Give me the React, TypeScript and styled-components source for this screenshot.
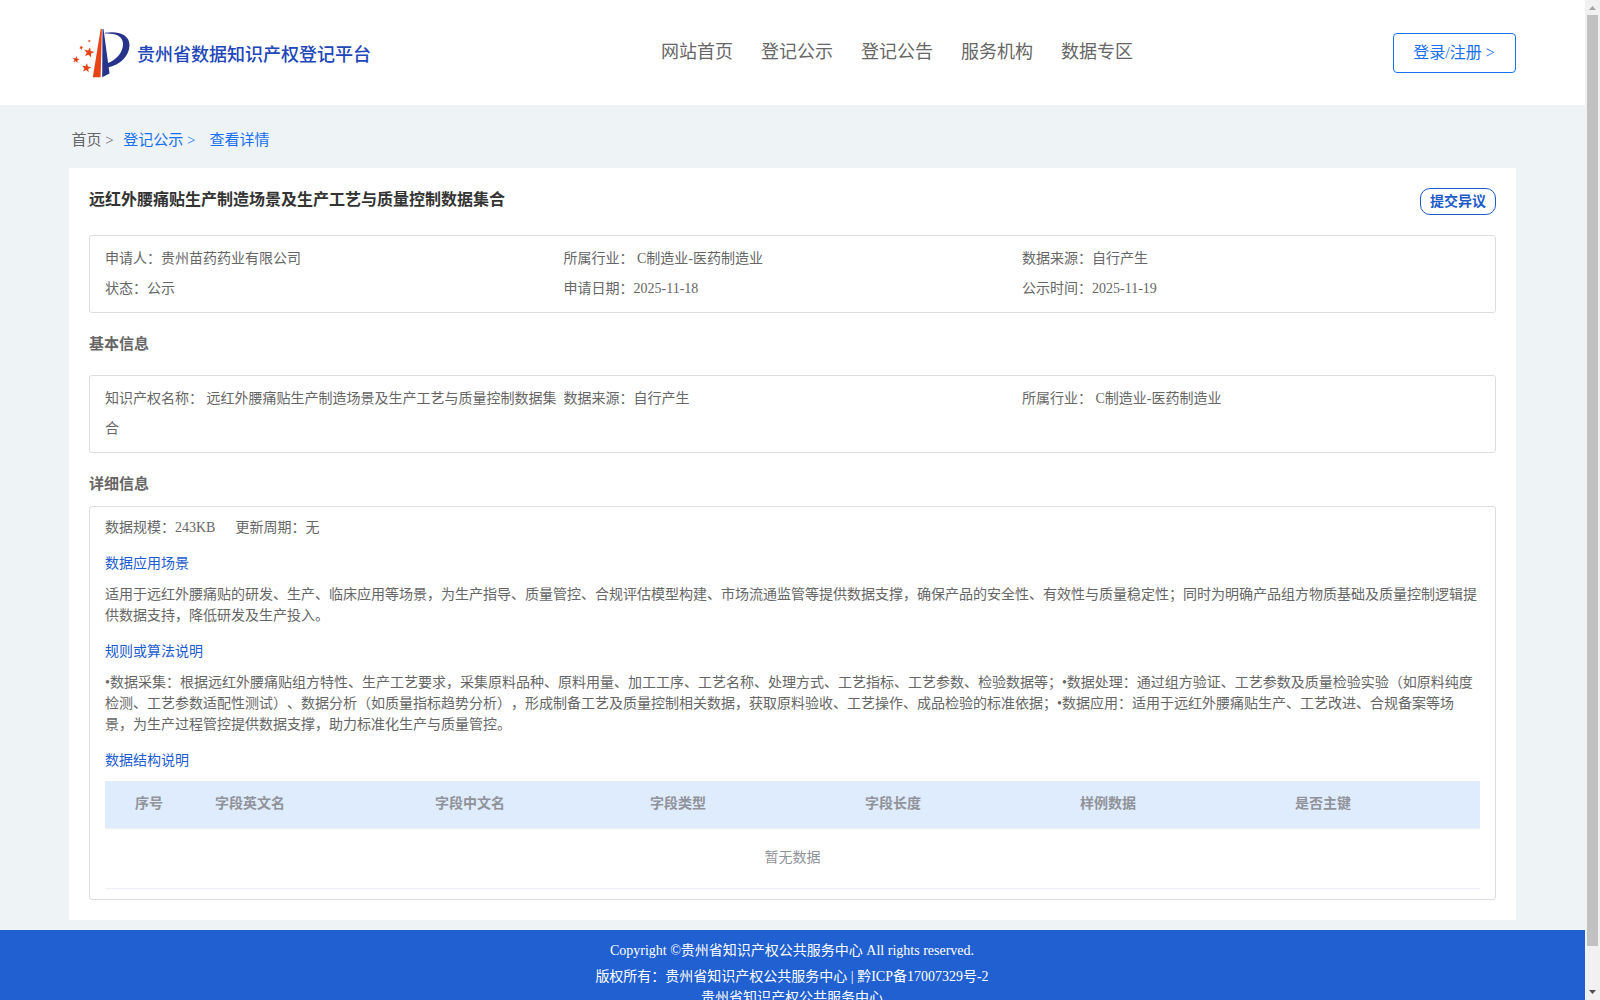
import React from 'react';
import styled, { createGlobalStyle } from 'styled-components';

const Global = createGlobalStyle`
  * { box-sizing: border-box; }
  html, body { margin: 0; padding: 0; overflow: hidden; }
  body {
    font-family: "Liberation Serif", "Noto Sans CJK SC", serif;
    font-size: 14px;
    color: #666;
    text-spacing-trim: space-all;
  }
`;

const Screen = styled.div`display: flex; width: 1600px; height: 1000px; overflow: hidden;`;
const Page = styled.div`width: 1585px; height: 1000px; overflow: hidden; background: #eef3f6; display: flex; flex-direction: column;`;

const Header = styled.header`height: 105px; flex: none; background: #fff; padding: 0 69px; display: flex; justify-content: space-between; align-items: flex-start;`;
const Brand = styled.div`display: flex; width: 592px; padding-top: 24px;`;
const BrandName = styled.div`margin: 16px 0 0 2px; font-size: 18px; line-height: 30px; font-weight: 500; color: #2146b8; white-space: nowrap;`;
const Nav = styled.nav`display: flex; gap: 28px; flex: 1; padding-top: 37px;`;
const NavItem = styled.a`font-size: 18px; line-height: 30px; white-space: nowrap;`;
const Login = styled.button`width: 123px; height: 40px; margin-top: 33px; padding: 0 1px 0 0; border: 1px solid #1870f0; border-radius: 4px; background: #fff; color: #1870f0; font: inherit; font-size: 16px; line-height: 38px;`;

const Crumbs = styled.div`height: 63px; flex: none; padding: 20px 0 0 71.5px; font-size: 15px; line-height: 30px; display: flex; white-space: pre;`;
const Crumb = styled.span<{ $active?: boolean; $gap?: number }>`color: ${p => (p.$active ? '#1870f0' : '#666')}; margin-right: ${p => p.$gap ?? 0}px;`;

const Card = styled.main`width: 1447px; height: 752px; flex: none; margin-left: 69px; padding: 20px; background: #fff;`;
const TitleRow = styled.div`display: flex; justify-content: space-between; height: 47px;`;
const Title = styled.h1`margin: 0; font-size: 16px; line-height: 24px; color: #333; font-weight: 700;`;
const Objection = styled.button`width: 76px; height: 27px; padding: 0; border: 1px solid #1c5cc8; border-radius: 10px; background: #fff; color: #1c5cc8; font: inherit; font-weight: 700; font-size: 14px; line-height: 24px;`;
const Box = styled.section`border: 1px solid #ddd; border-radius: 3px; padding: 8px 15px;`;
const InfoGrid = styled.div`display: grid; grid-template-columns: 458.5px 458.5px 1fr; line-height: 30px; height: 60px; white-space: pre-wrap;`;
const Section = styled.h2<{ $h: number }>`margin: 0; height: ${p => p.$h}px; padding-top: 20px; font-size: 15px; line-height: 22px; font-weight: 700; color: #666;`;
const DetailBox = styled(Box)`height: 394px; padding: 6px 15px 0;`;
const Meta = styled.div`display: flex; gap: 20px; line-height: 30px; height: 30px;`;
const SubTitle = styled.h3`margin: 6px 0 5px; font-size: 14px; font-weight: 400; line-height: 30px; height: 30px; color: #1c5cd0;`;
const Text = styled.p`margin: 0 0 11px; line-height: 21px; white-space: pre;`;

const Table = styled.div`width: 1375px;`;
const HeadRow = styled.div`display: grid; grid-template-columns: 80px 220px repeat(5, 215px); height: 48px; background: #dfecfe; border-bottom: 1px solid #ebeef5; color: #909399; font-weight: 700; line-height: 45px;`;
const HeadCell = styled.div`padding-left: 30px;`;
const Empty = styled.div`height: 60px; border-bottom: 1px solid #ebeef5; text-align: center; line-height: 57px; color: #909399;`;

const Footer = styled.footer`margin-top: 10px; height: 70px; flex: none; background: #2160d0; color: #fff; text-align: center; overflow: hidden; padding: 8px 1px 0 0;`;
const FootLine = styled.div<{ $h?: number }>`line-height: ${p => p.$h ?? 26}px; height: ${p => p.$h ?? 26}px; white-space: pre;`;

const Bar = styled.aside`width: 15px; height: 1000px; background: #f1f1f1; display: flex; flex-direction: column; align-items: flex-start; padding-left: 2px;`;
const Thumb = styled.div`width: 11px; height: 931px; background: #c1c1c1;`;
const Arrow = styled.svg`display: block; width: 13px; height: 15px; flex: none;`;
const Spacer = styled.div`flex: 1;`;

const star = (cx: number, cy: number, r: number, turn: number) =>
  Array.from({ length: 10 }, (_, i) => {
    const a = ((turn + i * 36 - 90) * Math.PI) / 180;
    const d = i % 2 ? r * 0.42 : r;
    return `${(cx + d * Math.cos(a)).toFixed(2)},${(cy + d * Math.sin(a)).toFixed(2)}`;
  }).join(' ');

const stars = [
  [20, 28.5, 5.4, 12],
  [12.3, 23.7, 2.3, 20],
  [20.3, 17, 1.6, 0],
  [7, 35.7, 3.7, 10],
  [17.4, 44, 4.9, 8],
];

const Logo = () => (
  <svg width="66" height="58" viewBox="0 0 66 58">
    {stars.map(([x, y, r, t]) => <polygon key={x + y} points={star(x, y, r, t)} fill="#e64317" />)}
    <path d="M31.700 5h1.200l-1.300 48.300h-7.800z" fill="#e64317" />
    <path d="M33.500 5h1L40.500 49.500L33.200 53.300z" fill="#28348a" />
    <path d="M36 8.800C48 6.500 60.500 10 60.500 21C60.500 32 51 41 38.800 43.600L38.300 39.300C47 36 54 29 54 20C54 11.500 45 9 36 9.600z" fill="#28348a" />
  </svg>
);

const heads = ['序号', '字段英文名', '字段中文名', '字段类型', '字段长度', '样例数据', '是否主键'];

export default function App() {
  return (
    <Screen>
      <Global />
      <Page>
        <Header>
          <Brand>
            <Logo />
            <BrandName>贵州省数据知识产权登记平台</BrandName>
          </Brand>
          <Nav>
            {['网站首页', '登记公示', '登记公告', '服务机构', '数据专区'].map(t => <NavItem key={t}>{t}</NavItem>)}
          </Nav>
          <Login>登录/注册 &gt;</Login>
        </Header>
        <Crumbs>
          <Crumb $gap={9.5}>首页 &gt;</Crumb>
          <Crumb $active $gap={14}>登记公示 &gt;</Crumb>
          <Crumb $active>查看详情</Crumb>
        </Crumbs>
        <Card>
          <TitleRow>
            <Title>远红外腰痛贴生产制造场景及生产工艺与质量控制数据集合</Title>
            <Objection>提交异议</Objection>
          </TitleRow>
          <Box>
            <InfoGrid>
              <span>申请人：贵州苗药药业有限公司</span>
              <span>所属行业： C制造业-医药制造业</span>
              <span>数据来源：自行产生</span>
              <span>状态：公示</span>
              <span>申请日期：2025-11-18</span>
              <span>公示时间：2025-11-19</span>
            </InfoGrid>
          </Box>
          <Section $h={62}>基本信息</Section>
          <Box>
            <InfoGrid>
              <span>知识产权名称： 远红外腰痛贴生产制造场景及生产工艺与质量控制数据集合</span>
              <span>数据来源：自行产生</span>
              <span>所属行业： C制造业-医药制造业</span>
            </InfoGrid>
          </Box>
          <Section $h={53}>详细信息</Section>
          <DetailBox>
            <Meta><span>数据规模：243KB</span><span>更新周期：无</span></Meta>
            <SubTitle>数据应用场景</SubTitle>
            <Text>{'适用于远红外腰痛贴的研发、生产、临床应用等场景，为生产指导、质量管控、合规评估模型构建、市场流通监管等提供数据支撑，确保产品的安全性、有效性与质量稳定性；同时为明确产品组方物质基础及质量控制逻辑提\n供数据支持，降低研发及生产投入。'}</Text>
            <SubTitle>规则或算法说明</SubTitle>
            <Text>{'•数据采集：根据远红外腰痛贴组方特性、生产工艺要求，采集原料品种、原料用量、加工工序、工艺名称、处理方式、工艺指标、工艺参数、检验数据等；•数据处理：通过组方验证、工艺参数及质量检验实验（如原料纯度\n检测、工艺参数适配性测试）、数据分析（如质量指标趋势分析），形成制备工艺及质量控制相关数据，获取原料验收、工艺操作、成品检验的标准依据；•数据应用：适用于远红外腰痛贴生产、工艺改进、合规备案等场\n景，为生产过程管控提供数据支撑，助力标准化生产与质量管控。'}</Text>
            <SubTitle>数据结构说明</SubTitle>
            <Table>
              <HeadRow>{heads.map(h => <HeadCell key={h}>{h}</HeadCell>)}</HeadRow>
              <Empty>暂无数据</Empty>
            </Table>
          </DetailBox>
        </Card>
        <Footer>
          <FootLine>Copyright ©贵州省知识产权公共服务中心 All rights reserved.</FootLine>
          <FootLine>版权所有：贵州省知识产权公共服务中心 | 黔ICP备17007329号-2</FootLine>
          <FootLine $h={16}>贵州省知识产权公共服务中心</FootLine>
        </Footer>
      </Page>
      <Bar>
        <Arrow viewBox="0 0 13 15"><path d="M2 10h7L5.500 6z" fill="#a3a3a3" /></Arrow>
        <Thumb />
        <Spacer />
        <Arrow viewBox="0 0 13 15"><path d="M2 5h7L5.500 9z" fill="#505050" /></Arrow>
      </Bar>
    </Screen>
  );
}
